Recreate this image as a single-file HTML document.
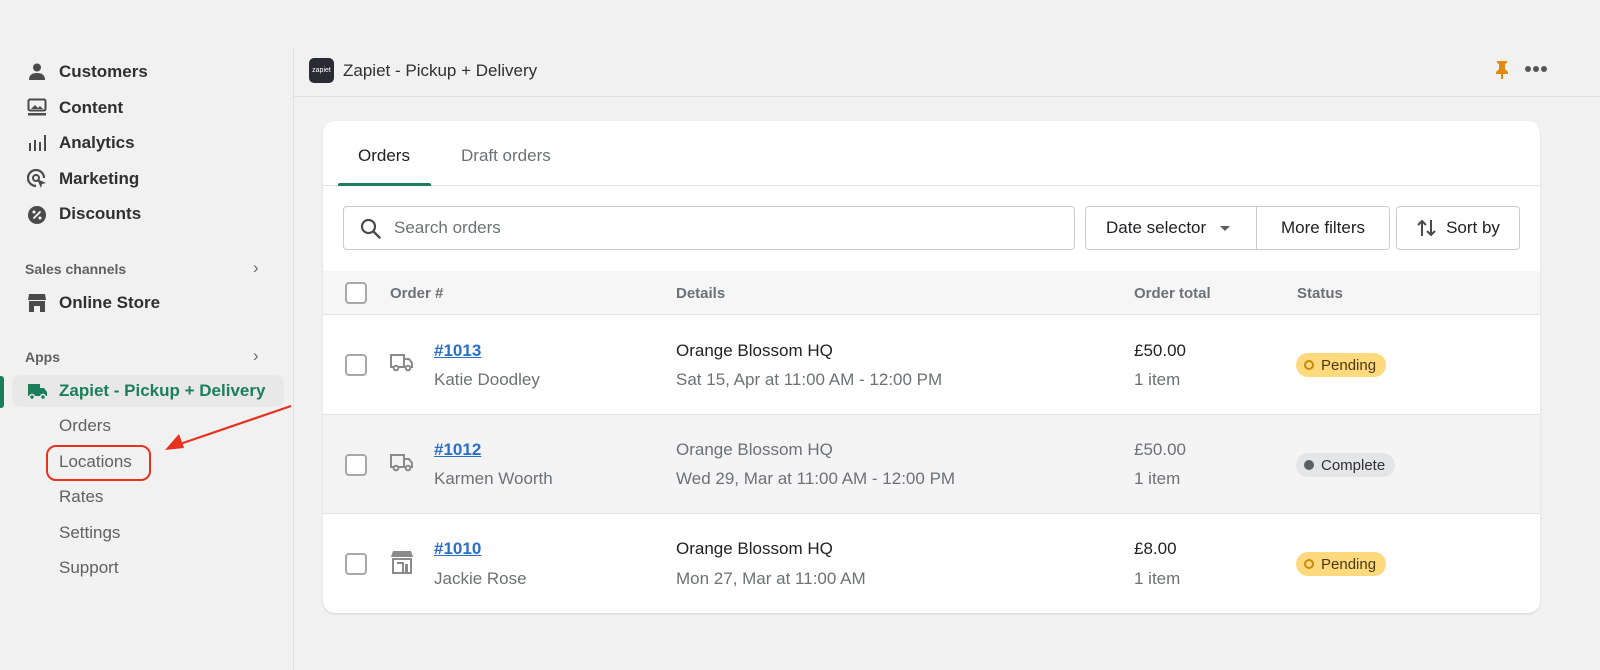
<!DOCTYPE html>
<html><head><meta charset="utf-8"><style>
*{box-sizing:border-box;margin:0;padding:0}
body{width:1600px;height:670px;background:#f1f1f1;font-family:"Liberation Sans",sans-serif;color:#303030;position:relative;overflow:hidden}
.a{position:absolute;white-space:nowrap}
.nav{font-size:17px;font-weight:600;color:#303030;left:59px}
.sub{font-size:17px;color:#616161;left:59px}
.sec{font-size:14px;font-weight:600;color:#616161;left:25px}
.ic{position:absolute;left:27px}
.card{position:absolute;left:323px;top:121px;width:1217px;height:492px;background:#fff;border-radius:12px;overflow:hidden;box-shadow:0 1px 2px rgba(0,0,0,.12)}
.btn{position:absolute;top:206px;height:44px;border:1px solid #c9cccf;border-radius:4px;background:#fff;font-size:17px;color:#202223;display:flex;align-items:center;justify-content:center}
.cb{position:absolute;width:22px;height:22px;border:2px solid #a8a8a8;border-radius:4px;left:345px;background:#fff}
.th{font-size:15px;font-weight:600;color:#6d7175}
.t1{font-size:17px;color:#202223}
.t2{font-size:17px;color:#6d7175}
.lnk{font-size:17px;font-weight:700;color:#2c6ecb;text-decoration:underline}
.badge{position:absolute;height:24px;border-radius:12px;font-size:15px;display:flex;align-items:center;padding:0 10px 0 8px}
</style></head><body>
<div class="a" style="left:293px;top:48px;width:1px;height:622px;background:#e1e1e1"></div>
<svg class="ic" style="top:62px" width="20" height="20" viewBox="0 0 20 20"><circle cx="10" cy="5.5" r="4" fill="#4a4a4a"/><path d="M2 18c0-5 3-7 8-7s8 2 8 7z" fill="#4a4a4a"/></svg>
<div class="a nav" style="top:62px">Customers</div>
<svg class="ic" style="top:98px" width="20" height="20" viewBox="0 0 20 20"><rect x="1.5" y="1.5" width="17" height="11" rx="1.5" fill="none" stroke="#4a4a4a" stroke-width="2"/><path d="M4 11l4-4 3 3 2-2 3 3z" fill="#4a4a4a"/><rect x="1" y="15" width="18" height="2.5" fill="#4a4a4a"/></svg>
<div class="a nav" style="top:98px">Content</div>
<svg class="ic" style="top:133px" width="20" height="20" viewBox="0 0 20 20"><rect x="2" y="10" width="2" height="8" fill="#4a4a4a"/><rect x="7" y="7" width="2" height="11" fill="#4a4a4a"/><rect x="12" y="9" width="2" height="9" fill="#4a4a4a"/><rect x="17" y="2" width="2" height="16" fill="#4a4a4a"/></svg>
<div class="a nav" style="top:133px">Analytics</div>
<svg class="ic" style="top:169px" width="21" height="21" viewBox="0 0 21 21"><path d="M9 17a8 8 0 1 1 8-8" fill="none" stroke="#4a4a4a" stroke-width="2.2"/><circle cx="9" cy="9" r="3" fill="none" stroke="#4a4a4a" stroke-width="2"/><path d="M10 10l9 4-4 1-1 4z" fill="#4a4a4a"/></svg>
<div class="a nav" style="top:169px">Marketing</div>
<svg class="ic" style="top:205px" width="20" height="20" viewBox="0 0 20 20"><circle cx="10" cy="10" r="9" fill="#4a4a4a"/><path d="M6.5 13.5l7-7" stroke="#fff" stroke-width="1.8"/><circle cx="7" cy="7" r="1.5" fill="#fff"/><circle cx="13" cy="13" r="1.5" fill="#fff"/></svg>
<div class="a nav" style="top:204px">Discounts</div>
<div class="a sec" style="top:261px">Sales channels</div>
<div class="a" style="left:253px;top:258px;font-size:17px;color:#6d6d6d">&#x203A;</div>
<svg class="ic" style="top:293px" width="20" height="20" viewBox="0 0 20 20"><path d="M2 1h16l1 6H1z" fill="#4a4a4a"/><path d="M2 8h16v11h-5v-6H7v6H2z" fill="#4a4a4a"/></svg>
<div class="a nav" style="top:293px">Online Store</div>
<div class="a sec" style="top:349px">Apps</div>
<div class="a" style="left:253px;top:346px;font-size:17px;color:#6d6d6d">&#x203A;</div>
<div class="a" style="left:12px;top:375px;width:272px;height:32px;background:#e8e8e8;border-radius:8px"></div>
<div class="a" style="left:0;top:376px;width:4px;height:32px;background:#1a7f5a;border-radius:0 3px 3px 0"></div>
<svg class="ic" style="top:381px" width="21" height="20" viewBox="0 0 21 20"><path d="M1 3h12v12H1z" fill="#1a7f5a"/><path d="M13 7h4l3 4v4h-7z" fill="#1a7f5a"/><circle cx="5" cy="16" r="2.5" fill="#1a7f5a" stroke="#e8e8e8" stroke-width="1.5"/><circle cx="16" cy="16" r="2.5" fill="#1a7f5a" stroke="#e8e8e8" stroke-width="1.5"/></svg>
<div class="a nav" style="top:381px;color:#1a7f5a">Zapiet - Pickup + Delivery</div>
<div class="a sub" style="top:416px">Orders</div>
<div class="a sub" style="top:452px">Locations</div>
<div class="a" style="left:46px;top:445px;width:105px;height:36px;border:2px solid #e8321f;border-radius:10px"></div>
<div class="a sub" style="top:487px">Rates</div>
<div class="a sub" style="top:523px">Settings</div>
<div class="a sub" style="top:558px">Support</div>
<svg class="a" style="left:160px;top:400px" width="135" height="60"><line x1="131" y1="6" x2="20" y2="44" stroke="#e8321f" stroke-width="2.2"/><path d="M5 50l14-16 5 14z" fill="#e8321f"/></svg>
<div class="a" style="left:294px;top:96px;width:1306px;height:1px;background:#e1e1e1"></div>
<div class="a" style="left:309px;top:58px;width:25px;height:25px;background:#2b2b36;border-radius:5px;color:#fff;font-size:7px;display:flex;align-items:center;justify-content:center">zapiet</div>
<div class="a" style="left:343px;top:61px;font-size:17px;color:#303030">Zapiet - Pickup + Delivery</div>
<svg class="a" style="left:1494px;top:60px" width="16" height="20" viewBox="0 0 16 20"><path d="M3 1h10v2l-2 1v5l3 3v2H2v-2l3-3V4L3 3z" fill="#e08b10"/><rect x="7" y="14" width="2" height="5" fill="#e08b10"/></svg>
<div class="a" style="left:1525px;top:66px;width:22px;height:6px;display:flex;justify-content:space-between"><i style="width:6px;height:6px;border-radius:3px;background:#555"></i><i style="width:6px;height:6px;border-radius:3px;background:#555"></i><i style="width:6px;height:6px;border-radius:3px;background:#555"></i></div>
<div class="card">
 <div class="a" style="left:35px;top:25px;font-size:17px;color:#202223">Orders</div>
 <div class="a" style="left:138px;top:25px;font-size:17px;color:#6d7175">Draft orders</div>
 <div class="a" style="left:0;top:64px;width:1217px;height:1px;background:#e1e3e5"></div>
 <div class="a" style="left:15px;top:62px;width:93px;height:3px;background:#1a7f5a;border-radius:2px 2px 0 0"></div>
 <div class="a" style="left:0;top:150px;width:1217px;height:44px;background:#f6f6f7;border-bottom:1px solid #e1e3e5"></div>
 <div class="a" style="left:0;top:293px;width:1217px;height:100px;background:#f4f4f4;border-top:1px solid #e1e3e5;border-bottom:1px solid #e1e3e5"></div>
</div>
<div class="btn" style="left:343px;width:732px;justify-content:flex-start;padding-left:50px;color:#6d7175">Search orders</div>
<svg class="a" style="left:359px;top:217px" width="24" height="24" viewBox="0 0 24 24"><circle cx="9.5" cy="9.5" r="6.5" fill="none" stroke="#4a4a4a" stroke-width="2.2"/><path d="M14.5 14.5l6 6" stroke="#4a4a4a" stroke-width="2.4" stroke-linecap="round"/></svg>
<div class="btn" style="left:1085px;width:172px;border-radius:4px 0 0 4px;justify-content:flex-start;padding-left:20px">Date selector<span style="margin-left:14px;width:0;height:0;border-left:5px solid transparent;border-right:5px solid transparent;border-top:5px solid #5c5f62"></span></div>
<div class="btn" style="left:1256px;width:134px;border-radius:0 4px 4px 0">More filters</div>
<div class="btn" style="left:1396px;width:124px"><svg width="22" height="20" viewBox="0 0 22 20" style="margin-right:8px"><path d="M6 18V3M2 7l4-4 4 4" fill="none" stroke="#4a4a4a" stroke-width="2"/><path d="M15 2v15M11 13l4 4 4-4" fill="none" stroke="#4a4a4a" stroke-width="2"/></svg>Sort by</div>
<div class="cb" style="top:282px"></div>
<div class="a th" style="left:390px;top:285px">Order #</div>
<div class="a th" style="left:676px;top:285px">Details</div>
<div class="a th" style="left:1134px;top:285px">Order total</div>
<div class="a th" style="left:1297px;top:285px">Status</div>

<div class="cb" style="top:354px"></div>
<svg class="a" style="left:389px;top:352px" width="26" height="20" viewBox="0 0 26 20"><path d="M2 3h13v12H2z M15 7h5l3 4v4h-8z" fill="none" stroke="#8a8a8a" stroke-width="2"/><circle cx="7" cy="16" r="2.3" fill="#fff" stroke="#8a8a8a" stroke-width="2"/><circle cx="19" cy="16" r="2.3" fill="#fff" stroke="#8a8a8a" stroke-width="2"/></svg>
<div class="a lnk" style="left:434px;top:341px">#1013</div>
<div class="a t2" style="left:434px;top:370px">Katie Doodley</div>
<div class="a t1" style="left:676px;top:341px">Orange Blossom HQ</div>
<div class="a t2" style="left:676px;top:370px">Sat 15, Apr at 11:00 AM - 12:00 PM</div>
<div class="a t1" style="left:1134px;top:341px">£50.00</div>
<div class="a t2" style="left:1134px;top:370px">1 item</div>
<div class="badge" style="left:1296px;top:353px;background:#ffd97d;color:#4a3a10"><span style="width:10px;height:10px;border:2.5px solid #c98a0c;border-radius:50%;margin-right:7px"></span>Pending</div>

<div class="cb" style="top:454px"></div>
<svg class="a" style="left:389px;top:452px" width="26" height="20" viewBox="0 0 26 20"><path d="M2 3h13v12H2z M15 7h5l3 4v4h-8z" fill="none" stroke="#8a8a8a" stroke-width="2"/><circle cx="7" cy="16" r="2.3" fill="#f4f4f4" stroke="#8a8a8a" stroke-width="2"/><circle cx="19" cy="16" r="2.3" fill="#f4f4f4" stroke="#8a8a8a" stroke-width="2"/></svg>
<div class="a lnk" style="left:434px;top:440px">#1012</div>
<div class="a t2" style="left:434px;top:469px">Karmen Woorth</div>
<div class="a t2" style="left:676px;top:440px">Orange Blossom HQ</div>
<div class="a t2" style="left:676px;top:469px">Wed 29, Mar at 11:00 AM - 12:00 PM</div>
<div class="a t2" style="left:1134px;top:440px">£50.00</div>
<div class="a t2" style="left:1134px;top:469px">1 item</div>
<div class="badge" style="left:1296px;top:453px;background:#e4e5e7;color:#303030"><span style="width:10px;height:10px;background:#5c5f62;border-radius:50%;margin-right:7px"></span>Complete</div>

<div class="cb" style="top:553px"></div>
<svg class="a" style="left:389px;top:549px" width="26" height="26" viewBox="0 0 26 26"><path d="M4 2h18l2 6H2z" fill="#8a8a8a"/><path d="M4 10h18v14H4z M8 14h6v10" fill="none" stroke="#8a8a8a" stroke-width="2"/><rect x="16" y="15" width="3" height="8" fill="#8a8a8a"/></svg>
<div class="a lnk" style="left:434px;top:539px">#1010</div>
<div class="a t2" style="left:434px;top:569px">Jackie Rose</div>
<div class="a t1" style="left:676px;top:539px">Orange Blossom HQ</div>
<div class="a t2" style="left:676px;top:569px">Mon 27, Mar at 11:00 AM</div>
<div class="a t1" style="left:1134px;top:539px">£8.00</div>
<div class="a t2" style="left:1134px;top:569px">1 item</div>
<div class="badge" style="left:1296px;top:552px;background:#ffd97d;color:#4a3a10"><span style="width:10px;height:10px;border:2.5px solid #c98a0c;border-radius:50%;margin-right:7px"></span>Pending</div>
</body></html>
